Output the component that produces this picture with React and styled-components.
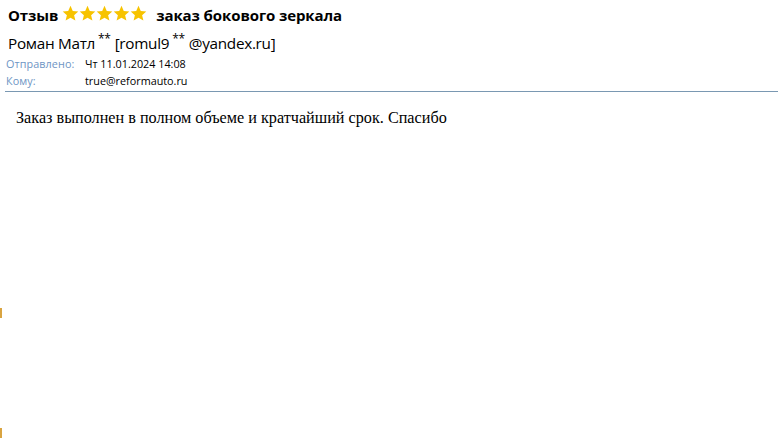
import React from "react";
import styled, { createGlobalStyle } from "styled-components";

const Global = createGlobalStyle`
  html, body { margin: 0; padding: 0; background: #fff; }
  body { width: 779px; height: 438px; overflow: hidden; position: relative; }
`;

const Page = styled.div`
  width: 779px;
  height: 438px;
  position: relative;
  font-family: "Open Sans", "Noto Sans", sans-serif;
  color: #000;
`;

const Header = styled.header`
  display: flex;
  flex-direction: column;
  padding: 0 1px 0 5px;
`;

const Title = styled.h1`
  margin: 0;
  padding: 0 0 0 3px;
  height: 29px;
  display: flex;
  align-items: center;
  font-size: 15px;
  font-weight: 700;
  letter-spacing: -0.1px;
`;

const Stars = styled.span`
  display: inline-flex;
  gap: 0;
  margin: -2px 9px 0 4px;
`;

const From = styled.div`
  margin-top: 2px;
  padding-left: 3px;
  height: 24px;
  display: flex;
  align-items: center;
  font-size: 15.3px;
  letter-spacing: -0.3px;
`;

const Sup = styled.span`
  font-size: 12px;
  position: relative;
  top: -5px;
  margin: 0 4px 0 3px;
`;

const MetaRow = styled.div`
  display: grid;
  grid-template-columns: 80px 1fr;
  height: 17px;
  align-items: center;
  font-size: 10.8px;
`;

const Label = styled.span`
  color: #6e95c4;
  padding-left: 1px;
  letter-spacing: 0.1px;
`;

const Value = styled.span`
  color: #000;
`;

const Divider = styled.hr`
  margin: 2px 0 0 0;
  border: none;
  border-top: 1px solid #7a98b2;
  height: 0;
`;

const Body = styled.p`
  margin: 0;
  padding: 17px 16px 0;
  font-family: "Liberation Serif", "Times New Roman", serif;
  font-size: 16.2px;
`;

const Mark = styled.span`
  position: absolute;
  left: 0;
  width: 2px;
  height: 10px;
  background: #d9a441;
  top: ${(p) => p.$top}px;
`;

const Star = () => (
  <svg width="17" height="17" viewBox="0 0 24 24">
    <path
      d="M12 1.2l3.2 7.2 7.8.7-5.9 5.2 1.8 7.7L12 18l-6.9 4 1.8-7.7L1 9.1l7.8-.7z"
      fill="#f7c300"
    />
  </svg>
);

export default function App() {
  return (
    <Page>
      <Global />
      <Header>
        <Title>
          Отзыв
          <Stars>
            <Star />
            <Star />
            <Star />
            <Star />
            <Star />
          </Stars>
          заказ бокового зеркала
        </Title>
        <From>
          Роман Матл<Sup>**</Sup> [romul9<Sup>**</Sup>@yandex.ru]
        </From>
        <MetaRow>
          <Label>Отправлено:</Label>
          <Value>Чт 11.01.2024 14:08</Value>
        </MetaRow>
        <MetaRow>
          <Label>Кому:</Label>
          <Value>true@reformauto.ru</Value>
        </MetaRow>
        <Divider />
      </Header>
      <Body>Заказ выполнен в полном объеме и кратчайший срок. Спасибо</Body>
      <Mark $top={308} />
      <Mark $top={428} />
    </Page>
  );
}
